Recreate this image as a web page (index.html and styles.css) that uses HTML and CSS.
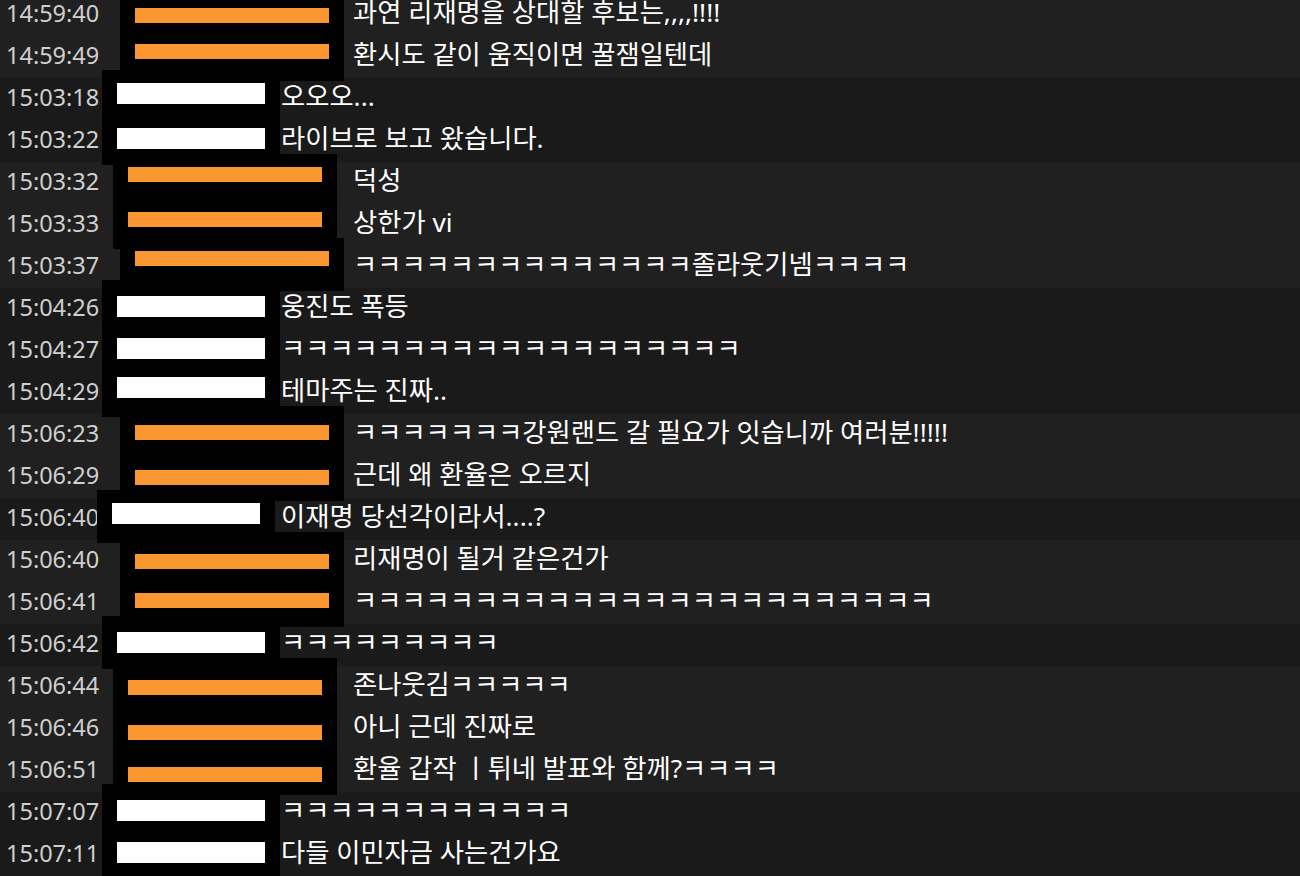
FILE: index.html
```html
<!DOCTYPE html>
<html lang="ko">
<head>
    <meta charset="UTF-8">
    <meta name="viewport" content="width=device-width, initial-scale=1.0">
    <title>Chat Log</title>
    <link rel="stylesheet" href="styles.css">
</head>
<body>
    <div class="log">
        <div class="group light">
            <div class="row orange"><span class="time">14:59:40</span><span class="name low"><i class="bar"></i></span><span class="msg">과연 리재명을 상대할 후보는,,,,!!!!</span></div>
            <div class="row orange"><span class="time">14:59:49</span><span class="name"><i class="bar"></i></span><span class="msg">환시도 같이 움직이면 꿀잼일텐데</span></div>
        </div>

        <div class="group dark">
            <div class="row white"><span class="time">15:03:18</span><span class="name up"><i class="bar"></i></span><span class="msg">오오오...</span></div>
            <div class="row white"><span class="time">15:03:22</span><span class="name"><i class="bar"></i></span><span class="msg">라이브로 보고 왔습니다.</span></div>
        </div>

        <div class="group light">
            <div class="row orange nudge"><span class="time">15:03:32</span><span class="name up"><i class="bar"></i></span><span class="msg">덕성</span></div>
            <div class="row orange nudge"><span class="time">15:03:33</span><span class="name"><i class="bar"></i></span><span class="msg">상한가 vi</span></div>
            <div class="row orange"><span class="time">15:03:37</span><span class="name up"><i class="bar"></i></span><span class="msg">ㅋㅋㅋㅋㅋㅋㅋㅋㅋㅋㅋㅋㅋㅋ졸라웃기넴ㅋㅋㅋㅋ</span></div>
        </div>

        <div class="group dark">
            <div class="row white"><span class="time">15:04:26</span><span class="name"><i class="bar"></i></span><span class="msg">웅진도 폭등</span></div>
            <div class="row white"><span class="time">15:04:27</span><span class="name"><i class="bar"></i></span><span class="msg">ㅋㅋㅋㅋㅋㅋㅋㅋㅋㅋㅋㅋㅋㅋㅋㅋㅋㅋㅋ</span></div>
            <div class="row white"><span class="time">15:04:29</span><span class="name up"><i class="bar"></i></span><span class="msg">테마주는 진짜..</span></div>
        </div>

        <div class="group light">
            <div class="row orange"><span class="time">15:06:23</span><span class="name mid"><i class="bar"></i></span><span class="msg">ㅋㅋㅋㅋㅋㅋㅋ강원랜드 갈 필요가 잇습니까 여러분!!!!!</span></div>
            <div class="row orange"><span class="time">15:06:29</span><span class="name low"><i class="bar"></i></span><span class="msg">근데 왜 환율은 오르지</span></div>
        </div>

        <div class="group dark">
            <div class="row white nudge"><span class="time">15:06:40</span><span class="name up"><i class="bar"></i></span><span class="msg">이재명 당선각이라서....?</span></div>
        </div>

        <div class="group light">
            <div class="row orange"><span class="time">15:06:40</span><span class="name low"><i class="bar"></i></span><span class="msg">리재명이 될거 같은건가</span></div>
            <div class="row orange"><span class="time">15:06:41</span><span class="name mid"><i class="bar"></i></span><span class="msg">ㅋㅋㅋㅋㅋㅋㅋㅋㅋㅋㅋㅋㅋㅋㅋㅋㅋㅋㅋㅋㅋㅋㅋㅋ</span></div>
        </div>

        <div class="group dark">
            <div class="row white"><span class="time">15:06:42</span><span class="name"><i class="bar"></i></span><span class="msg">ㅋㅋㅋㅋㅋㅋㅋㅋㅋ</span></div>
        </div>

        <div class="group light">
            <div class="row orange nudge"><span class="time">15:06:44</span><span class="name low"><i class="bar"></i></span><span class="msg">존나웃김ㅋㅋㅋㅋㅋ</span></div>
            <div class="row orange nudge"><span class="time">15:06:46</span><span class="name lower"><i class="bar"></i></span><span class="msg">아니 근데 진짜로</span></div>
            <div class="row orange nudge"><span class="time">15:06:51</span><span class="name lower"><i class="bar"></i></span><span class="msg">환율 갑작 ㅣ튀네 발표와 함께?ㅋㅋㅋㅋ</span></div>
        </div>

        <div class="group dark">
            <div class="row white"><span class="time">15:07:07</span><span class="name"><i class="bar"></i></span><span class="msg">ㅋㅋㅋㅋㅋㅋㅋㅋㅋㅋㅋㅋ</span></div>
            <div class="row white"><span class="time">15:07:11</span><span class="name"><i class="bar"></i></span><span class="msg">다들 이민자금 사는건가요</span></div>
        </div>
    </div>
</body>
</html>
```

FILE: styles.css
```css
* {
    margin: 0;
    padding: 0;
    box-sizing: border-box;
}

body {
    background: #1a1a1a;
    font-family: 'Noto Sans', 'Noto Sans CJK KR', sans-serif;
    overflow: hidden;
}

.log {
    margin-top: -6px;
}

.group.light {
    background: #202020;
}

.group.dark {
    background: #1a1a1a;
}

.row {
    display: flex;
    height: 42px;
}

.time {
    flex: none;
    padding-left: 6px;
    line-height: 38px;
    font-size: 23.5px;
    color: #cfcfcf;
}

/* redacted nickname */
.name {
    position: relative;
    z-index: 1;
    flex: none;
    margin: -8px 0 -3px;
    padding-top: 16px;
    background: #000;
}

.name.up { padding-top: 13px; }
.name.mid { padding-top: 19px; }
.name.low { padding-top: 22px; }
.name.lower { padding-top: 25px; }

.bar {
    display: block;
    margin: 0 15px;
}

.msg {
    flex: 1;
    line-height: 37px;
    font-size: 26.3px;
    color: #fff;
    white-space: nowrap;
}

.orange .time { width: 120px; }
.orange .name { width: 224px; }
.orange .msg { padding-left: 9px; }
.orange .bar {
    height: 15px;
    background: #fa9731;
}

.orange.nudge .time { width: 113px; }
.orange.nudge .msg { padding-left: 16px; }

.white .time { width: 102px; }
.white .name { width: 178px; }
.white .msg { padding-left: 1px; }
.white .bar {
    height: 21px;
    background: #fff;
}

.white.nudge .time { width: 97px; }
.white.nudge .msg { padding-left: 6px; }
```
